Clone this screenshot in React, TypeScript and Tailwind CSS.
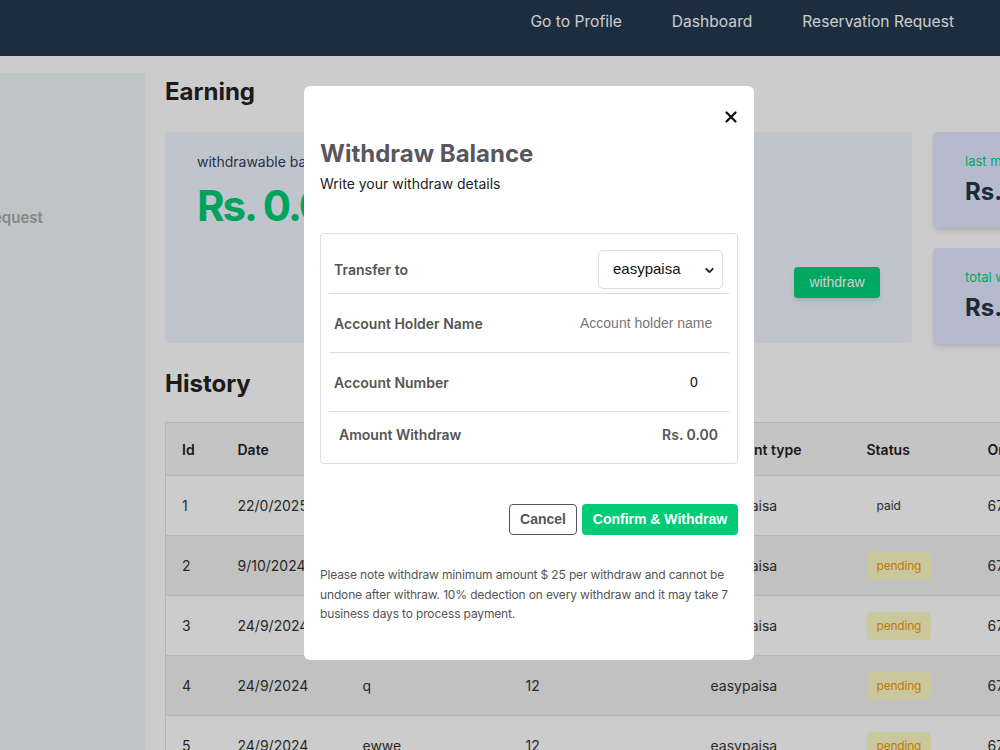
import React from "react";
import { X, ChevronDown } from "lucide-react";

const dm = { fontFamily: "Inter, 'Noto Sans', sans-serif" };
const arial = { fontFamily: "'Liberation Sans', Arial, sans-serif" };

type Row = { id: string; date: string; name: string; amount: string; type: string; status: "paid" | "pending"; order: string };

const rows: Row[] = [
  { id: "1", date: "22/0/2025", name: "abc", amount: "30", type: "easypaisa", status: "paid", order: "67a9c4e1b2" },
  { id: "2", date: "9/10/2024", name: "test", amount: "25", type: "easypaisa", status: "pending", order: "6707f2ab91" },
  { id: "3", date: "24/9/2024", name: "qw", amount: "12", type: "easypaisa", status: "pending", order: "67f2b8c3d4" },
  { id: "4", date: "24/9/2024", name: "q", amount: "12", type: "easypaisa", status: "pending", order: "67f2b7a1e9" },
  { id: "5", date: "24/9/2024", name: "ewwe", amount: "12", type: "easypaisa", status: "pending", order: "67f2b6f0c2" },
];

export default function App() {
  return (
    <div className="relative w-[1000px] h-[750px] overflow-hidden bg-white" style={dm}>
      {/* Header */}
      <header className="h-[56px] bg-[#233950] flex items-start justify-end pt-[13px] pr-[46px] gap-[50px] text-white text-[15.6px] leading-[18px]">
        <span>Go to Profile</span>
        <span>Dashboard</span>
        <span>Reservation Request</span>
      </header>

      <div className="flex">
        {/* Sidebar */}
        <aside className="mt-[17px] w-[145px] h-[700px] bg-[#eff6f5] overflow-hidden shrink-0">
          <div className="mt-[134px] ml-[-107px] whitespace-nowrap text-[15px] font-semibold text-[#a8a8a8]">
            Reservation Request
          </div>
        </aside>

        {/* Main */}
        <main className="pl-[20px] pt-[20px] shrink-0">
          <h2 className="text-[24px] leading-[32px] font-bold text-[#222]">Earning</h2>

          <div className="mt-[24px] flex gap-[21px]">
            <div className="w-[747px] h-[211px] bg-[#f1f5ff] rounded-[4px] flex flex-col px-[32px] pt-[20px] pb-[45px]">
              <div className="text-[14px] leading-[20px] text-[#334155]">withdrawable balance</div>
              <div className="mt-[10px] text-[42px] leading-[48px] font-bold text-[#00cc72] tracking-[-2px]">Rs. 0.00</div>
              <div className="mt-auto flex justify-end">
                <button className="w-[86px] h-[31px] bg-[#00d27b] rounded-[4px] text-white text-[14px] shadow-md" style={arial}>
                  withdraw
                </button>
              </div>
            </div>
            <div className="flex flex-col gap-[20px]">
              <div className="w-[200px] h-[96px] bg-[#e3e9ff] rounded-[4px] shadow-md pl-[32px] pt-[20px]">
                <div className="text-[13px] leading-[18px] text-[#00d27b]">last month earning</div>
                <div className="mt-[7px] text-[24px] leading-[30px] font-bold text-[#233548]">Rs. 0.00</div>
              </div>
              <div className="w-[200px] h-[96px] bg-[#e3e9ff] rounded-[4px] shadow-md pl-[32px] pt-[20px]">
                <div className="text-[13px] leading-[18px] text-[#00d27b]">total withdraw</div>
                <div className="mt-[7px] text-[24px] leading-[30px] font-bold text-[#233548]">Rs. 0.00</div>
              </div>
            </div>
          </div>

          <h2 className="mt-[24px] text-[24px] leading-[32px] font-bold text-[#222]">History</h2>

          <table className="mt-[22px] table-fixed border-collapse border border-[#e2e2e2] text-[14px] text-[#333] w-[960px]">
            <thead>
              <tr className="h-[53px] bg-[#f5f5f5] text-left text-[#222]">
                <th className="w-[56px] pl-[16px] font-semibold">Id</th>
                <th className="w-[125px] pl-[16px] font-semibold">Date</th>
                <th className="w-[163px] pl-[16px] font-semibold">Account Name</th>
                <th className="w-[185px] pl-[16px] font-semibold">Amount</th>
                <th className="w-[156px] pl-[16px] font-semibold">Account type</th>
                <th className="w-[121px] pl-[16px] font-semibold">Status</th>
                <th className="pl-[16px] font-semibold">Order Id</th>
              </tr>
            </thead>
            <tbody>
              {rows.map((r, i) => (
                <tr key={r.id} className={`h-[60px] border-t border-[#e2e2e2] ${i % 2 === 1 ? "bg-[#f2f2f2]" : "bg-white"}`}>
                  <td className="pl-[16px]">{r.id}</td>
                  <td className="pl-[16px]">{r.date}</td>
                  <td className="pl-[16px]">{r.name}</td>
                  <td className="pl-[16px]">{r.amount}</td>
                  <td className="pl-[16px]">{r.type}</td>
                  <td className="pl-[16px]">
                    {r.status === "paid" ? (
                      <span className="inline-block px-[10px] py-[4px] text-[12px] text-[#333]">paid</span>
                    ) : (
                      <span className="inline-block px-[10px] py-[5px] rounded-[4px] bg-[#fef9c3] text-[12px] text-[#f29a06] tracking-[-0.2px]">pending</span>
                    )}
                  </td>
                  <td className="pl-[16px]">{r.order}</td>
                </tr>
              ))}
            </tbody>
          </table>
        </main>
      </div>

      {/* Overlay */}
      <div className="absolute inset-0 bg-black/20">
        <div className="absolute left-[304px] top-[86px] w-[450px] h-[574px] bg-white rounded-[6px] px-[16px] pt-[22px]">
          <div className="flex justify-end mr-[-2px]">
            <X size={18} strokeWidth={3} className="text-[#111]" />
          </div>
          <h3 className="mt-[13px] text-[24px] leading-[30px] font-bold text-[#58575f]">Withdraw Balance</h3>
          <p className="mt-[5px] text-[14px] leading-[20px] text-[#222]">Write your withdraw details</p>

          <div className="mt-[39px] border border-[#dddddd] rounded-[4px] px-[8px]">
            <div className="h-[60px] pt-[11px] flex items-center justify-between pl-[5px] pr-[6px] border-b border-[#dddddd]">
              <span className="text-[14px] font-semibold text-[#555]">Transfer to</span>
              <div className="relative w-[125px] h-[39px] border border-[#dddddd] rounded-[5px] flex items-center pl-[14px]" style={arial}>
                <span className="text-[15px] text-[#111]">easypaisa</span>
                <ChevronDown size={13} strokeWidth={3.5} className="absolute right-[6px] top-[13px] text-[#222]" />
              </div>
            </div>
            <div className="h-[59px] flex items-center justify-between pl-[5px] pr-[6px] border-b border-[#dddddd]">
              <span className="text-[14px] font-semibold text-[#555]">Account Holder Name</span>
              <input
                placeholder="Account holder name"
                className="w-[143px] text-[14px] outline-none placeholder:text-[#777]"
                style={arial}
              />
            </div>
            <div className="h-[59px] flex items-center justify-between pl-[5px] pr-[6px] border-b border-[#dddddd]">
              <span className="text-[14px] font-semibold text-[#555]">Account Number</span>
              <span className="w-[33px] text-[14px] text-[#111]" style={arial}>0</span>
            </div>
            <div className="h-[51px] pb-[6px] flex items-center justify-between pl-[10px] pr-[11px]">
              <span className="text-[14px] font-semibold text-[#555]">Amount Withdraw</span>
              <span className="text-[14px] font-semibold text-[#555]">Rs. 0.00</span>
            </div>
          </div>

          <div className="mt-[40px] flex justify-end gap-[5px]" style={arial}>
            <button className="w-[68px] h-[31px] border border-[#555] rounded-[4px] text-[14px] font-bold text-[#555]">Cancel</button>
            <button className="w-[156px] h-[31px] bg-[#00cc77] rounded-[4px] text-[14px] font-bold text-white">Confirm &amp; Withdraw</button>
          </div>

          <p className="mt-[30px] text-[12px] leading-[19.5px] text-[#555] tracking-[-0.15px]">
            Please note withdraw minimum amount $ 25 per withdraw and cannot be undone after withraw. 10% dedection on every withdraw and it may take 7 business days to process payment.
          </p>
        </div>
      </div>
    </div>
  );
}
